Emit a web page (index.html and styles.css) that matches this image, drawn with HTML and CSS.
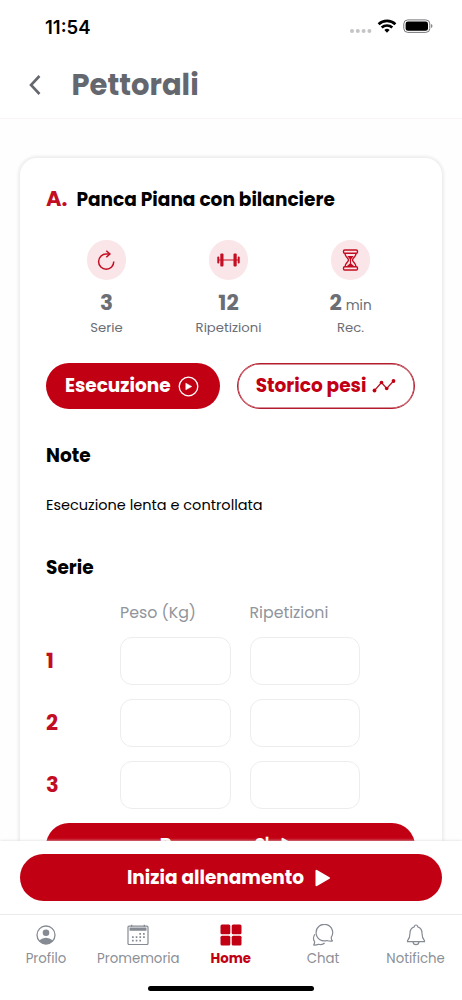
FILE: index.html
```html
<!DOCTYPE html>
<html lang="it">
<head>
<meta charset="utf-8">
<title>Pettorali</title>
<link rel="stylesheet" href="styles.css">
</head>
<body>
<div class="status">
  <span class="time">11:54</span>
  <svg class="status-icons" width="84" height="20" viewBox="0 0 84 20">
    <g fill="#c4c4c6"><circle cx="3" cy="14" r="2"/><circle cx="8.8" cy="14" r="2"/><circle cx="14.6" cy="14" r="2"/><circle cx="20.4" cy="14" r="2"/></g>
    <g fill="none" stroke="#000" stroke-width="2.7"><path d="M29.6 7.200a12.200 12.200 0 0 1 16.800 0"/><path d="M32.700 10.600a7.700 7.700 0 0 1 10.600 0"/></g>
    <path d="M35.400 12.900a3.800 3.800 0 0 1 5.200 0L38 15.700z"/>
    <rect x="54.800" y="2.900" width="26" height="12.500" rx="4" fill="none" stroke="#77777b"/>
    <rect x="56.600" y="4.600" width="22.400" height="9.200" rx="2.400"/>
    <path d="M82 7v4q1.500-.7 1.500-2T82 7z" fill="#88888b"/>
  </svg>
</div>
<header class="header">
  <svg class="back" width="14" height="22" viewBox="0 0 14 22"><path d="M12.500 2 4 11l8.500 9" fill="none" stroke="#65676f" stroke-width="2.600"/></svg>
  <h1>Pettorali</h1>
</header>
<main class="content">
  <section class="card">
    <div class="title"><span class="letter">A.</span><h2 class="exercise">Panca Piana con bilanciere</h2></div>
    <div class="stats">
      <div class="stat">
        <span class="circle"><svg width="24" height="24" viewBox="0 0 24 24" fill="none" stroke="#c40d22" stroke-width="1.500"><path d="M18.800 13.500a7.600 7.600 0 1 1-7.600-7.500h3.300"/><path d="m11.300 2.700 3.600 3.300-3.600 3.300"/></svg></span>
        <b class="value">3</b><span class="label">Serie</span>
      </div>
      <div class="stat">
        <span class="circle"><svg width="24" height="24" viewBox="0 0 24 24" fill="#c40d22"><rect x="3.300" y="5.500" width="3.200" height="13" rx="1"/><rect x="16.500" y="5.500" width="3.200" height="13" rx="1"/><rect x=".3" y="8.500" width="2" height="7" rx=".9"/><rect x="20.700" y="8.500" width="2" height="7" rx=".9"/><path d="M6 11.400h11v1.200H6zM2 11.400h2v1.200H2zM19 11.400h2v1.200h-2z"/></svg></span>
        <b class="value">12</b><span class="label">Ripetizioni</span>
      </div>
      <div class="stat">
        <span class="circle"><svg width="24" height="24" viewBox="0 0 24 24" fill="none" stroke="#c40d22" stroke-width="1.400"><rect x="4.500" y="2" width="14" height="3.200" rx="1.200"/><rect x="4.500" y="18.800" width="14" height="3.200" rx="1.200"/><path d="M6 5.200c0 4 3.500 4.800 3.500 6.800s-3.500 2.800-3.500 6.800M17 5.200c0 4-3.500 4.800-3.500 6.800s3.500 2.800 3.500 6.800"/><path d="M8.300 8h6.400l-2.600 3.200v4.200l3.200 2.800H7.700l3.200-2.800v-4.200z" fill="#c40d22" stroke="none"/></svg></span>
        <div class="value">2<span class="unit">min</span></div><span class="label">Rec.</span>
      </div>
    </div>
    <div class="actions">
      <button class="btn run">Esecuzione<svg width="21" height="21" viewBox="0 0 21 21"><circle cx="10.500" cy="10.500" r="9.300" fill="none" stroke="#fff" stroke-width="1.300"/><path d="M7.800 7.200v6.600l6-3.300z" fill="#fff" stroke="#fff" stroke-width=".5" stroke-linejoin="round"/></svg></button>
      <button class="btn outline">Storico pesi<svg width="24" height="16" viewBox="0 0 24 16" fill="#c20013"><path d="m2.500 12.500 7-8 5.200 6 6.800-7.500" fill="none" stroke="#b31625" stroke-width="1.200"/><circle cx="2.500" cy="12.500" r="1.900"/><circle cx="9.500" cy="4.500" r="1.800"/><circle cx="14.700" cy="10.500" r="1.800"/><circle cx="21.500" cy="3" r="1.900"/></svg></button>
    </div>
    <h3 class="heading">Note</h3>
    <p class="note">Esecuzione lenta e controllata</p>
    <h3 class="heading series">Serie</h3>
    <div class="sets">
      <span></span><span class="col">Peso (Kg)</span><span class="col">Ripetizioni</span>
      <b class="num">1</b><input class="field"><input class="field">
      <b class="num">2</b><input class="field"><input class="field">
      <b class="num">3</b><input class="field"><input class="field">
    </div>
    <button class="btn rest">Recupero 2'<svg width="16" height="18" viewBox="0 0 16 18"><path d="M1.500 1.800v14.400L14 9z" fill="#fff" stroke="#fff" stroke-width="2" stroke-linejoin="round"/></svg></button>
  </section>
</main>
<div class="cta"><button class="btn start">Inizia allenamento<svg width="16" height="18" viewBox="0 0 16 18"><path d="M1.500 1.800v14.400L14 9z" fill="#fff" stroke="#fff" stroke-width="2" stroke-linejoin="round"/></svg></button></div>
<nav class="tabs">
  <a class="tab"><svg width="22" height="22" viewBox="0 0 22 22"><circle cx="11" cy="11" r="9" fill="none" stroke="#858a93" stroke-width="1.300"/><circle cx="11" cy="8.700" r="3.300" fill="#858a93"/><path d="M4 16.500q7-5.400 14 0-2.700 3.500-7 3.500t-7-3.500z" fill="#858a93"/></svg><span>Profilo</span></a>
  <a class="tab"><svg width="22" height="22" viewBox="0 0 22 22" fill="#858a93"><rect x="1" y="2.200" width="20" height="18.300" rx="1" fill="none" stroke="#858a93" stroke-width="1.200"/><path d="M2.500 3.500h17v3.200h-17zM4 .8h1.300v2H4zM16.700.8H18v2h-1.300z"/><path d="M12.300 9.800h5.500M5 13.200h13M5 16.700h9" stroke="#858a93" stroke-width="1.700" stroke-dasharray="1.700 2"/></svg><span>Promemoria</span></a>
  <a class="tab active"><svg width="22" height="22" viewBox="0 0 22 22" fill="#c20013"><rect x=".5" y=".5" width="9.800" height="9.800" rx="1.500"/><rect x="11.700" y=".5" width="9.800" height="9.800" rx="1.500"/><rect x=".5" y="11.700" width="9.800" height="9.800" rx="1.500"/><rect x="11.700" y="11.700" width="9.800" height="9.800" rx="1.500"/></svg><span>Home</span></a>
  <a class="tab"><svg width="22" height="22" viewBox="0 0 22 22" fill="none" stroke="#858a93" stroke-width="1.200" stroke-linejoin="round"><path d="M19.300 13.200A8.300 8.300 0 1 0 15 16.500q2.500 1 5.500.5-1.500-1.700-1.200-3.800z"/><path d="M2.800 10.200Q.3 14.500 2.600 17.700q.1 1.700-1 3.300 3 .2 5-.8 3.600 1.200 6-1.200"/></svg><span>Chat</span></a>
  <a class="tab"><svg width="22" height="22" viewBox="0 0 22 22" fill="none" stroke="#858a93" stroke-width="1.200" stroke-linejoin="round"><path d="M11 1q1.500 0 1.700 1.800 4.300 1.200 4.300 6.400c0 4.500 1 5.700 2.500 7.600v.9h-17v-.9C4 14.900 5 13.700 5 9.200q0-5.200 4.300-6.400Q9.500 1 11 1zM8 17.700q.3 3 3 3t3-3"/></svg><span>Notifiche</span></a>
</nav>
<div class="homebar"></div>
</body>
</html>
```
FILE: styles.css
```css
* { box-sizing: border-box; margin: 0; }
body {
  width: 462px; height: 1000px; overflow: hidden;
  display: flex; flex-direction: column;
  background: #fff; color: #000;
  font-family: Poppins, Inter, "Noto Sans", sans-serif;
}
svg { display: block; flex: none; }
span, b, h1, h2, h3, p, button { white-space: nowrap; }
.status { height: 53px; padding: 0 29px 0 45px; display: flex; justify-content: space-between; align-items: center; }
.time { font: 600 18.5px/20px Inter, sans-serif; }
.status-icons { margin-top: 1px; }
.header { height: 66px; padding: 0 0 2px 27px; display: flex; align-items: center; gap: 30.5px; border-bottom: 1px solid #f9f5f6; }
.header h1 { font-size: 29px; line-height: 40px; font-weight: 700; color: #65676f; }
.content { flex: 1; min-height: 0; overflow: hidden; padding: 39px 20px 0; background: #fffefe; }
.card { height: 760px; padding: 23px 26px 0; border-radius: 17px; background: #fff; box-shadow: 0 0 3px 2px #eeedee; }
.title { height: 36px; display: flex; align-items: baseline; gap: 9px; }
.letter { color: #c20d22; font-size: 21px; line-height: 36px; font-weight: 700; }
.exercise { font-size: 18.55px; line-height: 36px; font-weight: 700; }
.stats { display: grid; grid-template-columns: repeat(3, 122px); margin-top: 23px; height: 123px; margin-left: -.5px; }
.stat { display: flex; flex-direction: column; align-items: center; color: #6b6e74; }
.circle { width: 39.5px; height: 39.5px; border-radius: 50%; background: #fae5e8; display: grid; place-items: center; }
.value { margin-top: 9.5px; height: 28px; font-size: 21.5px; line-height: 28px; font-weight: 700; }
.unit { margin-left: 4px; font-size: 13.5px; font-weight: 400; }
.label { margin-top: .5px; font-size: 13.2px; line-height: 20px; }
.actions { display: flex; justify-content: space-between; width: 369px; height: 46px; }
.btn { height: 46px; border: 0; border-radius: 24px; padding: 0; background: #c20013; color: #fff; font: 700 18.5px/24px Poppins, Inter, sans-serif; display: flex; align-items: center; justify-content: center; gap: 8px; }
.run { width: 173.5px; padding-right: 2px; gap: 7px; }
.outline { width: 178px; background: #fff; color: #c20013; border: 1px solid #b31c2c; box-shadow: inset 0 0 0 .5px #b31c2c; gap: 6px; }
.heading { margin-top: 35px; font-size: 18.5px; line-height: 24px; font-weight: 700; }
.note { margin-top: 26px; font-size: 14.5px; line-height: 22px; }
.series { margin-top: 40px; }
.sets { display: grid; grid-template-columns: 74px 110.5px 129.5px; grid-template-rows: 24px repeat(3, 48.5px); row-gap: 13.6px; margin-top: 19px; align-items: center; }
.sets > :nth-child(3n) { margin-left: 19px; }
.col { padding-top: 3px; color: #91959c; font-size: 15.8px; line-height: 24px; }
.num { color: #c20d22; font-size: 21px; line-height: 28px; font-weight: 700; }
.field { width: 110.5px; height: 48.5px; border: 1px solid #ededee; border-radius: 12px; background: #fff; }
.rest { width: 369px; margin-top: 13.5px; padding: 1px 4px 0 0; gap: 12px; }
.cta { position: relative; height: 73px; padding: 13px 20px; background: #fff; box-shadow: 0 0 3px #d8d8da; }
.start { width: 100%; height: 47px; padding-right: 4px; gap: 11px; }
.tabs { position: relative; background: #fff; height: 69px; display: grid; grid-template-columns: repeat(5, 1fr); border-top: 1px solid #ebebec; }
.tab { display: flex; flex-direction: column; align-items: center; gap: 3px; padding-top: 9px; margin-left: -.5px; color: #8b8f96; font-size: 13.3px; line-height: 20px; }
.active { color: #c20013; font-weight: 700; }
.homebar { margin: 3px auto 9px; width: 166px; height: 5px; border-radius: 3px; background: #000; flex: none; }
```
